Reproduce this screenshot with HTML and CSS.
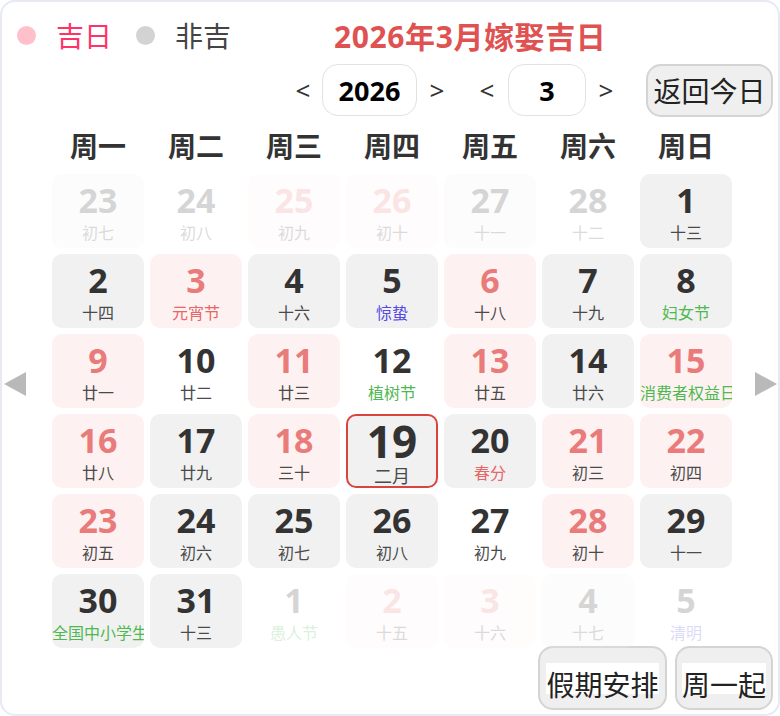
FILE: index.html
```html
<!DOCTYPE html>
<html lang="zh-CN">
<head>
<meta charset="utf-8">
<title>2026年3月嫁娶吉日</title>
<link rel="stylesheet" href="styles.css">
</head>
<body>
<div class="calendar">
  <div class="header">
    <div class="legend">
      <span class="dot dot-good"></span><span class="legend-good">吉日</span>
      <span class="dot dot-bad"></span><span class="legend-bad">非吉</span>
    </div>
    <div class="title">2026年3月嫁娶吉日</div>
  </div>
  <div class="controls">
    <span class="nav nav-lt1">&lt;</span>
    <span class="box box-year">2026</span>
    <span class="nav nav-gt1">&gt;</span>
    <span class="nav nav-lt2">&lt;</span>
    <span class="box box-month">3</span>
    <span class="nav nav-gt2">&gt;</span>
    <span class="btn btn-today"><span class="btn-label">返回今日</span></span>
  </div>
  <div class="main">
    <div class="side side-left">
      <svg width="22" height="24" viewBox="0 0 22 24"><polygon points="22,0 22,24 0,12" fill="#b9b9b9"/></svg>
    </div>
    <div class="board">
      <div class="weekdays">
        <div>周一</div><div>周二</div><div>周三</div><div>周四</div><div>周五</div><div>周六</div><div>周日</div>
      </div>
      <div class="grid">
        <div class="cell gray other"><div class="num">23</div><div class="lunar">初七</div></div>
        <div class="cell other"><div class="num">24</div><div class="lunar">初八</div></div>
        <div class="cell pink other"><div class="num">25</div><div class="lunar">初九</div></div>
        <div class="cell pink other"><div class="num">26</div><div class="lunar">初十</div></div>
        <div class="cell gray other"><div class="num">27</div><div class="lunar">十一</div></div>
        <div class="cell other"><div class="num">28</div><div class="lunar">十二</div></div>
        <div class="cell gray"><div class="num">1</div><div class="lunar">十三</div></div>

        <div class="cell gray"><div class="num">2</div><div class="lunar">十四</div></div>
        <div class="cell pink"><div class="num">3</div><div class="lunar red">元宵节</div></div>
        <div class="cell gray"><div class="num">4</div><div class="lunar">十六</div></div>
        <div class="cell gray"><div class="num">5</div><div class="lunar blue">惊蛰</div></div>
        <div class="cell pink"><div class="num">6</div><div class="lunar">十八</div></div>
        <div class="cell gray"><div class="num">7</div><div class="lunar">十九</div></div>
        <div class="cell gray"><div class="num">8</div><div class="lunar green">妇女节</div></div>

        <div class="cell pink"><div class="num">9</div><div class="lunar">廿一</div></div>
        <div class="cell"><div class="num">10</div><div class="lunar">廿二</div></div>
        <div class="cell pink"><div class="num">11</div><div class="lunar">廿三</div></div>
        <div class="cell"><div class="num">12</div><div class="lunar green">植树节</div></div>
        <div class="cell pink"><div class="num">13</div><div class="lunar">廿五</div></div>
        <div class="cell gray"><div class="num">14</div><div class="lunar">廿六</div></div>
        <div class="cell pink"><div class="num">15</div><div class="lunar green">消费者权益日</div></div>

        <div class="cell pink"><div class="num">16</div><div class="lunar">廿八</div></div>
        <div class="cell gray"><div class="num">17</div><div class="lunar">廿九</div></div>
        <div class="cell pink"><div class="num">18</div><div class="lunar">三十</div></div>
        <div class="cell gray today"><div class="num">19</div><div class="lunar">二月</div></div>
        <div class="cell gray"><div class="num">20</div><div class="lunar red">春分</div></div>
        <div class="cell pink"><div class="num">21</div><div class="lunar">初三</div></div>
        <div class="cell pink"><div class="num">22</div><div class="lunar">初四</div></div>

        <div class="cell pink"><div class="num">23</div><div class="lunar">初五</div></div>
        <div class="cell gray"><div class="num">24</div><div class="lunar">初六</div></div>
        <div class="cell gray"><div class="num">25</div><div class="lunar">初七</div></div>
        <div class="cell gray"><div class="num">26</div><div class="lunar">初八</div></div>
        <div class="cell"><div class="num">27</div><div class="lunar">初九</div></div>
        <div class="cell pink"><div class="num">28</div><div class="lunar">初十</div></div>
        <div class="cell gray"><div class="num">29</div><div class="lunar">十一</div></div>

        <div class="cell gray"><div class="num">30</div><div class="lunar green">全国中小学生</div></div>
        <div class="cell gray"><div class="num">31</div><div class="lunar">十三</div></div>
        <div class="cell other"><div class="num">1</div><div class="lunar green">愚人节</div></div>
        <div class="cell pink other"><div class="num">2</div><div class="lunar">十五</div></div>
        <div class="cell pink other"><div class="num">3</div><div class="lunar">十六</div></div>
        <div class="cell gray other"><div class="num">4</div><div class="lunar">十七</div></div>
        <div class="cell other"><div class="num">5</div><div class="lunar blue">清明</div></div>
      </div>
    </div>
    <div class="side side-right">
      <svg width="22" height="24" viewBox="0 0 22 24"><polygon points="0,0 0,24 22,12" fill="#b9b9b9"/></svg>
    </div>
  </div>
  <div class="footer">
    <span class="btn btn-holiday"><span class="btn-label">假期安排</span></span>
    <span class="btn btn-week"><span class="btn-label">周一起</span></span>
  </div>
</div>
</body>
</html>
```
FILE: styles.css
```css
html, body {
  margin: 0;
  padding: 0;
  background: #ffffff;
}
body {
  font-family: "Open Sans", "Noto Sans CJK SC", sans-serif;
  color: #333;
}
.calendar {
  box-sizing: border-box;
  width: 780px;
  height: 716px;
  border: 2px solid #e7e9f5;
  border-radius: 15px;
  overflow: hidden;
}
.header {
  display: flex;
  align-items: center;
  height: 50px;
  margin-top: 8px;
}
.legend {
  display: flex;
  align-items: center;
  margin-left: 15px;
  font-size: 28px;
  font-family: "Noto Sans CJK SC", sans-serif;
}
.dot {
  width: 19px;
  height: 19px;
  border-radius: 50%;
  display: inline-block;
}
.dot-good { background: #ffc0cb; }
.dot-bad { background: #d3d3d3; margin-left: 24px; }
.legend-good { color: #ff3366; margin-left: 20px; }
.legend-bad { color: #444; margin-left: 20px; }
.title {
  margin-left: 103px;
  font-size: 30px;
  letter-spacing: 0.6px;
  font-weight: 700;
  color: #e05252;
  font-family: "Open Sans", "Noto Sans CJK SC", sans-serif;
}
.controls {
  display: flex;
  align-items: center;
  justify-content: flex-end;
  height: 52px;
  margin-top: 4px;
  padding-right: 5px;
}
.nav {
  font-size: 26px;
  color: #333;
  width: 16px;
  text-align: center;
  font-family: "Noto Sans", sans-serif;
}
.box {
  box-sizing: border-box;
  height: 52px;
  border: 1.5px solid #e2e2e2;
  border-radius: 16px;
  display: flex;
  align-items: center;
  justify-content: center;
  font-size: 27px;
  font-weight: 700;
  color: #000;
  background: #fff;
}
.box-year { width: 95px; margin-left: 11px; }
.box-month { width: 78px; margin-left: 13px; }
.nav-gt1 { margin-left: 12px; }
.nav-lt2 { margin-left: 34px; }
.nav-gt2 { margin-left: 12px; }
.btn {
  box-sizing: border-box;
  display: flex;
  align-items: center;
  justify-content: center;
  background: #efefef;
  border: 2px solid #d4d4d4;
  border-radius: 15px;
  font-family: "Noto Sans CJK SC", sans-serif;
  font-size: 28px;
  color: #222;
}
.btn-today {
  width: 127px;
  height: 53px;
  margin-left: 32px;
}
.btn-label {
  display: inline-block;
  background: #fff;
  height: 31px;
  line-height: 42px;
  overflow: visible;
}
.btn-today .btn-label {
  background: transparent;
  line-height: 31px;
}
.main {
  display: flex;
  justify-content: space-between;
  align-items: center;
}
.side {
  width: 22px;
  height: 24px;
  padding-top: 4px;
}
.side-left { margin-left: 2px; }
.side-right { margin-right: 1px; }
.side svg { display: block; }
.board {
  width: 680px;
  margin-left: 25px;
  margin-right: 22px;
}
.weekdays {
  display: grid;
  grid-template-columns: repeat(7, 92px);
  column-gap: 6px;
  height: 58px;
  align-items: center;
  font-family: "Noto Sans CJK SC", sans-serif;
  font-size: 28px;
  font-weight: 700;
  color: #333;
  text-align: center;
}
.grid {
  display: grid;
  grid-template-columns: repeat(7, 92px);
  grid-auto-rows: 74px;
  gap: 6px;
}
.cell {
  box-sizing: border-box;
  border-radius: 10px;
  display: flex;
  flex-direction: column;
  align-items: stretch;
  text-align: center;
  overflow: hidden;
  white-space: nowrap;
  padding-top: 7px;
}
.cell.gray { background: #f1f1f1; }
.cell.pink { background: #fdf2f1; }
.cell.pink .num { color: #e97b7b; }
.cell.other { opacity: 0.2; }
.num {
  font-family: "Open Sans", sans-serif;
  font-size: 34px;
  font-weight: 700;
  line-height: 38px;
  color: #333;
}
.lunar {
  font-family: "Noto Sans CJK SC", sans-serif;
  font-size: 16px;
  line-height: 20px;
  color: #4a4a4a;
  margin-top: 3px;
}
.lunar.red { color: #e76666; }
.lunar.green { color: #4fb84f; }
.lunar.blue { color: #5549e4; }
.cell.today {
  border: 2px solid #d9453d;
  padding-top: 3px;
}
.cell.today .num {
  font-size: 44px;
  line-height: 44px;
}
.cell.today .lunar {
  font-size: 18px;
  line-height: 22px;
  margin-top: 1px;
}
.footer {
  display: flex;
  justify-content: flex-end;
  gap: 8px;
  margin-top: -2px;
  padding-right: 5px;
}
.btn-holiday { width: 129px; height: 64px; }
.btn-week { width: 98px; height: 64px; }
```
